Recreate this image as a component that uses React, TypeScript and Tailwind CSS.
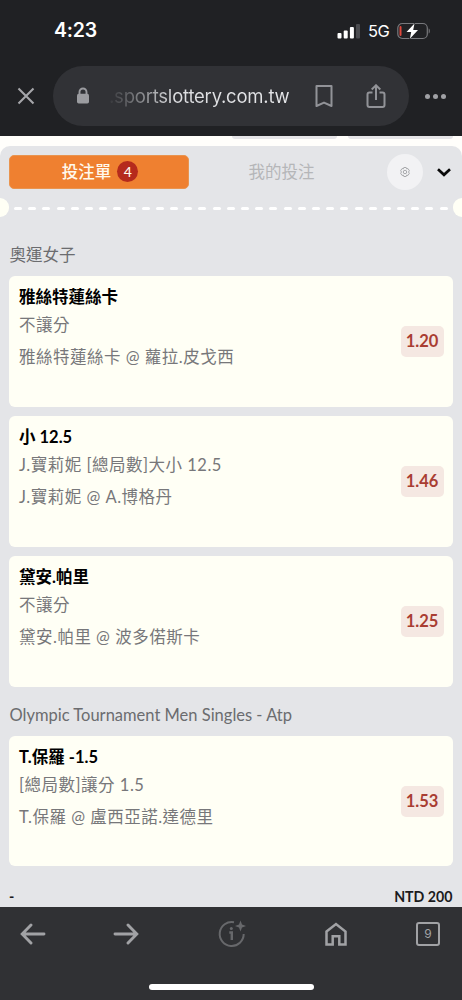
import React from 'react';

const groups = [
  {
    title: '奧運女子',
    bets: [
      { pick: '雅絲特蓮絲卡', market: '不讓分', match: '雅絲特蓮絲卡 @ 蘿拉.皮戈西', odds: '1.20' },
      { pick: '小 12.5', market: 'J.寶莉妮 [總局數]大小 12.5', match: 'J.寶莉妮 @ A.博格丹', odds: '1.46' },
      { pick: '黛安.帕里', market: '不讓分', match: '黛安.帕里 @ 波多偌斯卡', odds: '1.25' },
    ],
  },
  {
    title: 'Olympic Tournament Men Singles - Atp',
    bets: [
      { pick: 'T.保羅 -1.5', market: '[總局數]讓分 1.5', match: 'T.保羅 @ 盧西亞諾.達德里', odds: '1.53' },
    ],
  },
];

const StatusBar = () => (
  <div className="flex h-[62px] items-center justify-between pl-[54px] pr-[31px]">
    <span className="text-[19.5px] font-semibold leading-none tracking-[-0.2px] text-white">4:23</span>
    <div className="flex items-center">
      <svg width="24" height="16" viewBox="0 0 24 16">
        <rect x="0.5" y="10" width="4" height="5.5" rx="1" fill="#fff" />
        <rect x="6.7" y="7.5" width="4" height="8" rx="1" fill="#fff" />
        <rect x="12.9" y="4" width="4" height="11.5" rx="1" fill="#fff" />
        <rect x="19" y="1" width="4" height="14.5" rx="1" fill="#4b4c50" />
      </svg>
      <span className="ml-[7px] w-[22px] text-[16.5px] leading-none tracking-[-0.5px] text-white">5G</span>
      <svg className="ml-[7px]" width="34" height="18" viewBox="0 0 34 18">
        <rect x="0.8" y="1.5" width="29.5" height="15" rx="4.5" fill="none" stroke="#77787c" strokeWidth="1.2" />
        <path d="M31.7 6.5v5c1.5-.6 1.5-4.4 0-5z" fill="#77787c" />
        <rect x="2.5" y="4" width="2" height="10" rx="1" fill="#e0483c" />
        <path d="M17.5 1.5 9.5 10h4.700l-1.300 6.800L21 8h-4.800z" fill="#fff" stroke="#202124" strokeWidth="1" paintOrder="stroke" />
      </svg>
    </div>
  </div>
);

const AddressBar = () => (
  <div className="flex h-[68px] items-center">
    <div className="flex w-[53px] justify-center">
      <svg className="mr-[2px]" width="18" height="18" viewBox="0 0 18 18" fill="none" stroke="#a5a6aa" strokeWidth="2.1">
        <path d="M1.500 1.500l15 15M16.500 1.500l-15 15" />
      </svg>
    </div>
    <div className="flex h-[60px] w-[356px] items-center rounded-full bg-[#313236] pl-[23px]">
      <svg width="14" height="18" viewBox="0 0 14 18">
        <path d="M3.500 7.500V5a3.500 3.500 0 0 1 7 0v2.500" fill="none" stroke="#9b9ca0" strokeWidth="1.9" />
        <rect x="1" y="6.8" width="12" height="9.7" rx="1.7" fill="#9b9ca0" />
      </svg>
      <span className="ml-[19px] w-[183px] whitespace-nowrap bg-linear-to-r from-[#38393d] via-[#dcdde0] via-35% to-[#e4e5e8] bg-clip-text text-[18.5px] leading-[26px] tracking-[-0.22px] text-transparent">
        .sportslottery.com.tw
      </span>
      <svg className="ml-[23px]" width="18" height="24" viewBox="0 0 18 24" fill="none" stroke="#929398" strokeWidth="2">
        <path d="M1.500 2h15v20L9 18.600 1.500 22z" strokeLinejoin="round" />
      </svg>
      <svg className="ml-[33px]" width="20" height="24" viewBox="0 0 20 24" fill="none" stroke="#929398" strokeWidth="2">
        <path d="M6.500 8.500h-3a2 2 0 0 0-2 2V21a2 2 0 0 0 2 2h13a2 2 0 0 0 2-2V10.500a2 2 0 0 0-2-2h-3" />
        <path d="M10 16V1.500M5.700 5.500 10 1.300l4.300 4.200" />
      </svg>
    </div>
    <div className="flex w-[53px] justify-center gap-[3px]">
      <span className="size-[5px] rounded-full bg-[#a0a1a5]" />
      <span className="size-[5px] rounded-full bg-[#a0a1a5]" />
      <span className="size-[5px] rounded-full bg-[#a0a1a5]" />
    </div>
  </div>
);

const SlipTabs = () => (
  <div className="flex h-[51px] items-center pl-[9px]">
    <div className="flex h-[34px] w-[180px] items-center justify-center gap-[6px] rounded-[5px] border border-[#e9944f] bg-[#ef8030] pl-[2px] text-[16.5px] font-medium text-[#fff9ec]">
      <span className="pt-px">投注單</span>
      <span className="flex size-[21px] items-center justify-center rounded-full bg-[#b52a1c] text-[14px]">4</span>
    </div>
    <div className="ml-[1px] w-[183px] pt-[2px] text-center text-[16.5px] text-[#b5b6b8]">我的投注</div>
    <div className="ml-[14px] flex size-[36px] items-center justify-center rounded-full bg-[#f2f2f4]">
      <svg width="10" height="10" viewBox="0 0 22 22" fill="none" stroke="#98999c" strokeWidth="1.8">
        <path d="M8.500 1h5l1 3 3-.5L20.500 8 18.800 11l1.700 3-3 4.500-3-.5-1 3h-5l-1-3-3 .5-3-4.500L3.200 11 1.500 8l3-4.500 3 .5z" strokeLinejoin="round" />
        <circle cx="11" cy="11" r="3.8" />
      </svg>
    </div>
    <svg className="ml-[14px] mt-[2px]" width="14" height="9" viewBox="0 0 14 9" fill="none" stroke="#0a0a0a" strokeWidth="2.7">
      <path d="M1 1.300l6 5.500 6-5.500" />
    </svg>
  </div>
);

const Divider = () => (
  <div className="flex h-[20px] items-center">
    <span className="h-[19px] w-[9px] shrink-0 rounded-r-full bg-[#fffff5]" />
    <div className="mx-[5px] flex grow justify-between">
      {Array.from({ length: 31 }, (_, i) => (
        <span key={i} className="mt-[2px] h-[3px] w-[8px] rounded-full bg-white" />
      ))}
    </div>
    <span className="h-[19px] w-[9px] shrink-0 rounded-l-full bg-[#fffff5]" />
  </div>
);

const BetCard = ({ bet }: { bet: (typeof groups)[number]['bets'][number] }) => (
  <div className="flex h-[130.5px] items-center justify-between rounded-[6px] bg-[#fffff5] pl-[10px] pr-[9px]">
    <div className="h-full whitespace-nowrap pt-[8px] text-[16.5px] text-[#77777a]">
      <p className="h-[26px] font-bold leading-[26px] text-black">{bet.pick}</p>
      <p className="mt-[2px] h-[26px] leading-[26px] tracking-[0.5px]">{bet.market}</p>
      <p className="mt-[6px] h-[26px] leading-[26px] tracking-[0.5px]">{bet.match}</p>
    </div>
    <div className="flex h-[31px] w-[43px] items-center justify-center rounded-[5px] bg-[#f5e8e2] text-[16.5px] font-bold text-[#a93d32]">
      {bet.odds}
    </div>
  </div>
);

const BottomNav = () => (
  <div className="h-[93px] bg-[#303134]">
    <div className="flex h-[53px] items-center">
      <svg className="ml-[20px]" width="26" height="22" viewBox="0 0 26 22" fill="none" stroke="#a1a2a5" strokeWidth="2.9" strokeLinecap="round">
        <path d="M24 11H2.500M11 2 2.200 11l8.800 9" />
      </svg>
      <svg className="ml-[67px]" width="26" height="22" viewBox="0 0 26 22" fill="none" stroke="#a1a2a5" strokeWidth="2.9" strokeLinecap="round">
        <path d="M2 11h21.500M15 2l8.800 9-8.800 9" />
      </svg>
      <svg className="ml-[79px]" width="28" height="28" viewBox="0 0 28 28" fill="none" stroke="#67686b" strokeWidth="2">
        <path d="M16 2.200A12 12 0 1 0 25.700 14" />
        <path d="M11.300 12.500h2.500V20" strokeWidth="2.4" />
        <circle cx="13.300" cy="8.500" r="1.500" fill="#67686b" stroke="none" />
        <path d="M22.500 0.500l1.500 4L28 6l-4 1.500-1.500 4L21 7.500 17 6l4-1.500z" fill="#67686b" stroke="none" />
      </svg>
      <svg className="ml-[79px]" width="22" height="24" viewBox="0 0 22 24" fill="none" stroke="#a1a2a5" strokeWidth="2.5">
        <path d="M1.500 9.500 11 2l9.500 7.500v13h-6.200v-8.200H7.700v8.200H1.500z" />
      </svg>
      <div className="ml-[69px] flex size-[24px] items-center justify-center rounded-[3px] border-[2.5px] border-[#a1a2a5] text-[12px] leading-none text-[#a1a2a5]">9</div>
    </div>
    <div className="mx-auto mt-[24px] h-[6px] w-[165px] rounded-full bg-white" />
  </div>
);

const App = () => {
  return (
    <div className="flex h-[1000px] w-[462px] flex-col overflow-hidden bg-[#fffefb] font-['Inter','Noto_Sans_CJK_TC',sans-serif]">
      <header className="h-[136px] shrink-0 bg-[#202124]">
        <StatusBar />
        <AddressBar />
      </header>
      <div className="flex h-[10px] shrink-0 justify-end gap-[11px] pr-[9px]">
        <span className="h-[3px] w-[105px] rounded-b-[4px] bg-[#e5e4e7]" />
        <span className="h-[3px] w-[105px] rounded-b-[4px] bg-[#e5e4e7]" />
      </div>
      <main className="h-[761px] shrink-0 overflow-hidden rounded-t-[10px] bg-[#e4e5e8] font-['Lato','Noto_Sans_CJK_TC',sans-serif]">
        <SlipTabs />
        <Divider />
        <div className="pl-[9px] pr-[9.5px] pt-[10px]">
          {groups.map((group) => (
            <section key={group.title}>
              <h2 className="flex h-[49px] items-center pl-[0.5px] pt-[7px] text-[16.5px] leading-[26px] text-[#6b6c6f]">{group.title}</h2>
              <div className="flex flex-col gap-[9.7px]">
                {group.bets.map((bet) => (
                  <BetCard key={bet.match} bet={bet} />
                ))}
              </div>
            </section>
          ))}
          <div className="mt-[20px] flex justify-between text-[14.2px] font-bold leading-[22px] text-[#1b1b1d]">
            <span>-</span>
            <span>NTD 200</span>
          </div>
        </div>
      </main>
      <BottomNav />
    </div>
  );
};

export default App;
